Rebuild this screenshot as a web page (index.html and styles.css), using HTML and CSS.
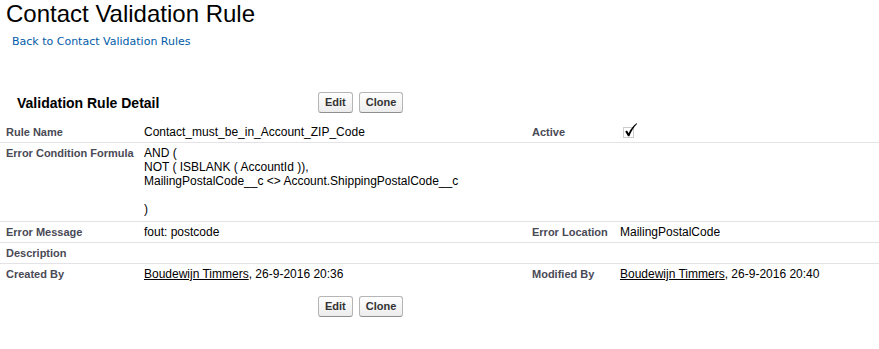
FILE: index.html
```html
<!DOCTYPE html>
<html>
<head>
<meta charset="utf-8">
<link rel="stylesheet" href="styles.css">
</head>
<body>
<h1 class="page-title">Contact Validation Rule</h1>
<div class="back"><a href="#">Back to Contact Validation Rules</a></div>

<div class="pb-header">
  <div class="pb-title">Validation Rule Detail</div>
  <div class="btns"><button class="btn">Edit</button><button class="btn">Clone</button></div>
</div>

<div class="detail">
  <div class="row">
    <div class="label">Rule Name</div>
    <div class="value">Contact_must_be_in_Account_ZIP_Code</div>
    <div class="label">Active</div>
    <div class="value"><svg class="check" width="16" height="16" viewBox="0 0 16 16"><rect x="1.5" y="5.5" width="10" height="10" fill="none" stroke="#9a9a9a" stroke-width="1" stroke-dasharray="1 1"/><path d="M3.2 9.6 L5 8.4 L6.6 11.2 C8.6 7.2 11 3.8 14.6 1.2 L15.2 1.8 C12 5 9.4 9 7.4 14.2 L6 14.2 Z" fill="#000"/></svg></div>
  </div>
  <div class="row tall">
    <div class="label">Error Condition Formula</div>
    <div class="value">AND (<br>NOT ( ISBLANK ( AccountId )),<br>MailingPostalCode__c &lt;&gt; Account.ShippingPostalCode__c<br><br>)</div>
    <div class="label"></div>
    <div class="value"></div>
  </div>
  <div class="row">
    <div class="label">Error Message</div>
    <div class="value">fout: postcode</div>
    <div class="label">Error Location</div>
    <div class="value">MailingPostalCode</div>
  </div>
  <div class="row">
    <div class="label">Description</div>
    <div class="value"></div>
    <div class="label"></div>
    <div class="value"></div>
  </div>
  <div class="row last">
    <div class="label">Created By</div>
    <div class="value"><a class="user" href="#">Boudewijn Timmers</a>, 26-9-2016 20:36</div>
    <div class="label">Modified By</div>
    <div class="value"><a class="user" href="#">Boudewijn Timmers</a>, 26-9-2016 20:40</div>
  </div>
</div>

<div class="pb-footer">
  <div class="btns"><button class="btn">Edit</button><button class="btn">Clone</button></div>
</div>
</body>
</html>
```

FILE: styles.css
```css
html, body {
  margin: 0;
  padding: 0;
  background: #fff;
}
body {
  font-family: "Liberation Sans", Arial, sans-serif;
  color: #000;
}
.page-title {
  margin: 0;
  padding-left: 6px;
  font-size: 24px;
  line-height: 28px;
  font-weight: normal;
  color: #000;
}
.back {
  margin-top: 7px;
  padding-left: 12px;
  font-family: "DejaVu Sans", Verdana, sans-serif;
  font-size: 11px;
  line-height: 14px;
}
.back a {
  color: #015ba7;
  text-decoration: none;
}
.pb-header {
  display: flex;
  align-items: center;
  margin-top: 43px;
  height: 21px;
}
.pb-title {
  box-sizing: border-box;
  width: 318px;
  padding-left: 17px;
  font-size: 14px;
  font-weight: bold;
  line-height: 16px;
  padding-top: 1px;
}
.btns {
  display: flex;
  gap: 6px;
}
.btn {
  box-sizing: border-box;
  height: 21px;
  margin: 0;
  padding: 0 6px;
  font-family: "Liberation Sans", Arial, sans-serif;
  font-size: 11px;
  font-weight: bold;
  color: #333;
  background: linear-gradient(#ffffff, #ececec);
  border: 1px solid #b5b5b5;
  border-bottom-color: #8f8f8f;
  border-radius: 3px;
  line-height: 19px;
}
.detail {
  margin-top: 9px;
}
.row {
  display: grid;
  grid-template-columns: 138px 388px 88px 1fr;
  border-bottom: 1px solid #e3e3e7;
}
.row.last {
  border-bottom: none;
}
.row > div {
  padding: 3px 0 3px 6px;
  line-height: 14px;
}
.row.tall > div {
  padding-bottom: 5px;
}
.label {
  font-size: 11px;
  font-weight: bold;
  color: #4a4a56;
}
.value {
  font-size: 12px;
  color: #000;
}
.check {
  display: block;
  margin-left: 2px;
  margin-top: -3px;
}
.user {
  color: #000;
  text-decoration: underline;
}
.pb-footer {
  margin-top: 12px;
  padding-left: 318px;
}
```
